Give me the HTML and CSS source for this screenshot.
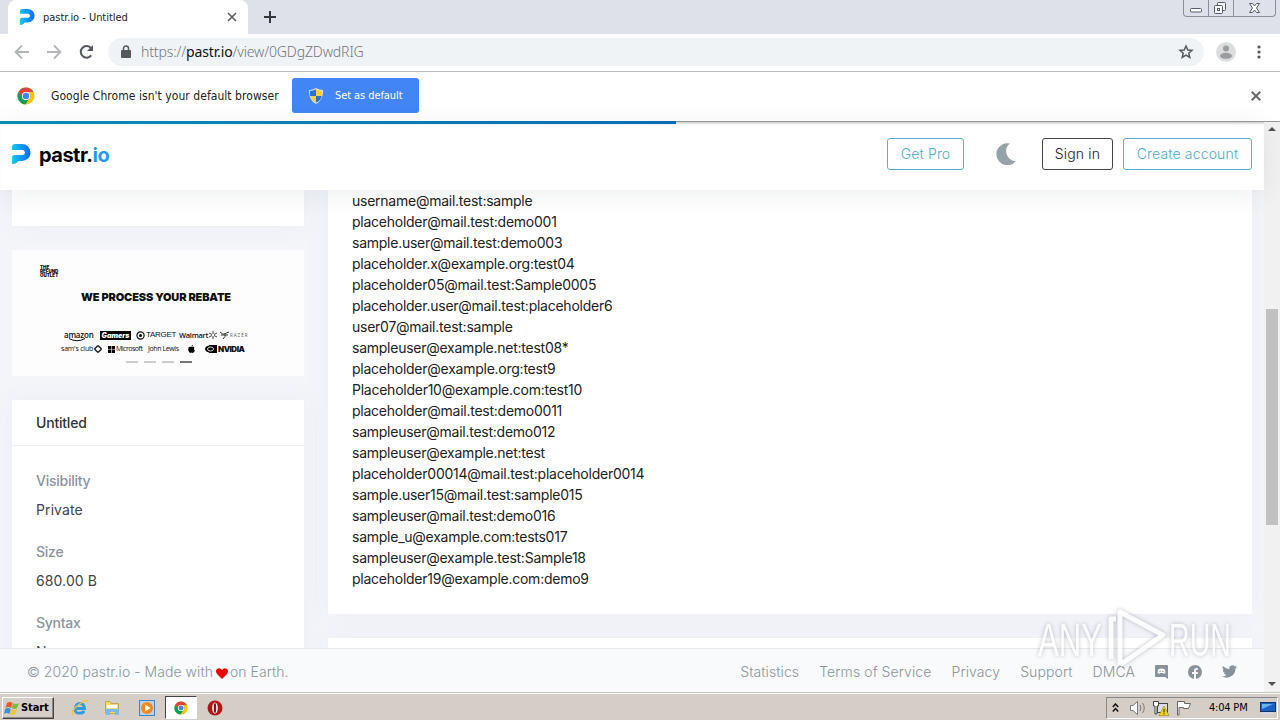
FILE: index.html
```html
<!DOCTYPE html>
<html lang="en">
<head>
<meta charset="utf-8">
<title>pastr.io - Untitled</title>
<link rel="stylesheet" href="styles.css">
</head>
<body>
<svg width="0" height="0" class="defs">
	<defs>
		<linearGradient id="pgrad" x1="0" y1="0" x2="1" y2="0"><stop offset="0" stop-color="#12c8f8"/><stop offset="1" stop-color="#0a68f0"/></linearGradient>
		<symbol id="logo" viewBox="0 0 20 20"><path fill="url(#pgrad)" d="M1 3Q1 0 4 0H11A8.500 8.500 0 0 1 11 17H7Q6 20 1 20V14Q1 11 4 11H12Q14 10 14 8.500T12 6H1Z"/></symbol>
		<symbol id="chrome" viewBox="0 0 18 18"><circle cx="9" cy="9" r="8.500" fill="#fbc116"/><path fill="#db4437" d="M1.600 4.800A8.500 8.500 0 0 1 16.500 5H9A4 4 0 0 0 5.300 10.800Z"/><path fill="#109d59" d="M1.600 4.800L5.500 11A4 4 0 0 0 12.200 11.300L8.500 17.500A8.500 8.500 0 0 1 1.600 4.800Z"/><circle cx="9" cy="9" r="4" fill="#fff"/><circle cx="9" cy="9" r="3.200" fill="#4285f4"/></symbol>
	</defs>
</svg>
<div class="tabstrip">
	<div class="tab">
		<svg class="favicon" width="16" height="16"><use href="#logo"/></svg>
		<span class="tabtitle">pastr.io - Untitled</span>
		<svg width="10" height="10" viewBox="0 0 10 10" stroke="#5a5d61" stroke-width="1.600"><path d="M1 1L9 9M9 1L1 9"/></svg>
	</div>
	<svg class="newtab" width="12" height="12" viewBox="0 0 12 12" stroke="#35383d" stroke-width="2"><path d="M6 0V12M0 6H12"/></svg>
	<div class="winbuttons">
		<span><svg width="24" height="16" fill="#fff" stroke="#555a66"><rect x="6.500" y="8.500" width="11" height="3.500" rx="1"/></svg></span>
		<span><svg width="24" height="16" fill="#f4f6f8" stroke="#555a66"><rect x="8.500" y="2.500" width="8" height="8" rx="1"/><rect x="5.500" y="5.500" width="8" height="8" rx="1"/><rect x="8.500" y="8.500" width="2" height="2"/></svg></span>
		<span><svg width="41" height="16" fill="#fff" stroke="#555a66"><path d="M15.500 3.500H18.500L20.500 6L22.500 3.500H25.500L22.500 8L25.500 12.500H22.500L20.500 10L18.500 12.500H15.500L18.500 8Z"/></svg></span>
	</div>
</div>
<div class="toolbar">
	<svg width="96" height="20" viewBox="0 0 96 20" fill="none" stroke-width="1.800">
		<path stroke="#b4b6b9" d="M15 10H2M8 3.500L1.500 10L8 16.500M33 10H46M40 3.500L46.500 10L40 16.500"/>
		<path stroke="#55585c" stroke-width="2" d="M77.200 13.400A5.800 5.800 0 1 1 76.700 5.800"/><path fill="#55585c" d="M79 3V9H73Z"/>
	</svg>
	<div class="omnibox">
		<svg width="10" height="13" viewBox="0 0 10 13"><rect y="5" width="10" height="8" rx="1" fill="#55585c"/><path d="M2.500 5V3.500A2.500 2.500 0 0 1 7.500 3.500V5" fill="none" stroke="#55585c" stroke-width="1.500"/></svg>
		<span class="url">https://<b>pastr.io</b>/view/0GDgZDwdRIG</span>
		<svg class="star" width="16" height="16" viewBox="0 0 16 16" fill="none" stroke="#55585c" stroke-width="1.500"><path d="M8 2L9.800 6L14 6.400L10.800 9.200L11.800 13.500L8 11.200L4.200 13.500L5.200 9.200L2 6.400L6.200 6Z"/></svg>
	</div>
	<svg class="avatar" width="20" height="20" viewBox="0 0 20 20"><circle cx="10" cy="10" r="10" fill="#dcdddf"/><circle cx="10" cy="6.500" r="3" fill="#9b9da0"/><ellipse cx="10" cy="13.800" rx="6" ry="3" fill="#9b9da0"/></svg>
	<svg class="dots" width="4" height="16" fill="#55585c"><circle cx="2" cy="3" r="1.600"/><circle cx="2" cy="8" r="1.600"/><circle cx="2" cy="13" r="1.600"/></svg>
</div>
<div class="infobar">
	<svg width="18" height="18"><use href="#chrome"/></svg>
	<span class="infotext">Google Chrome isn't your default browser</span>
	<button class="setdefault">
		<svg width="14" height="16" viewBox="0 0 14 16"><path fill="#dfe3ea" d="M7 0Q10 2 14 2Q14.500 12 7 16Q-.5 12 0 2Q4 2 7 0Z"/><path fill="#2e6fd0" d="M7 1.300V8H1.200Q.8 6 1 3Q4 3 7 1.300ZM7 8H12.800Q12 12.500 7 14.800Z"/><path fill="#f7d13c" d="M7 1.300V8H12.800Q13.200 6 13 3Q10 3 7 1.300ZM7 8H1.200Q2 12.500 7 14.800Z"/></svg>
		<span>Set as default</span>
	</button>
	<svg class="infoclose" width="10" height="10" viewBox="0 0 10 10" stroke="#66696d" stroke-width="2"><path d="M.7 .7L9.300 9.300M9.300 .7L.7 9.300"/></svg>
</div>
<div class="viewport">
	<div class="progress"></div>
	<div class="page">
		<header>
			<svg width="20" height="20"><use href="#logo"/></svg>
			<span class="brand">pastr.<i>io</i></span>
			<a class="btn getpro">Get Pro</a>
			<svg class="moon" width="20" height="22" viewBox="0 0 20 22"><path fill="#96a2a9" d="M14 0.500A11 11 0 1 0 20 18A9.800 9.800 0 0 1 14 0.500Z"/></svg>
			<a class="btn dark">Sign in</a>
			<a class="btn create">Create account</a>
		</header>
		<main>
			<aside>
				<div class="card stub"></div>
				<div class="ad">
					<div class="adlogo">THE<br>REFUND<br>OUTLET</div>
					<div class="adhead">WE PROCESS YOUR REBATE</div>
					<div class="brands">
						<span class="amazon">amazon<svg width="18" height="4" fill="none" stroke="#111"><path d="M1 .5Q9 5 17 .5"/></svg></span>
						<span class="gamers">Gamers</span>
						<span class="target"><svg width="9" height="9"><circle cx="4.500" cy="4.500" r="3.600" fill="none" stroke="#111" stroke-width="1.200"/><circle cx="4.500" cy="4.500" r="1.500"/></svg>TARGET</span>
						<span class="walmart">Walmart<svg width="8" height="8" stroke="#444"><path d="M4 0V3M4 5V8M0 2L3 3.500M5 4.500L8 6M8 2L5 3.500M3 4.500L0 6"/></svg></span>
						<span class="razer"><svg width="9" height="9" fill="none" stroke="#333"><path d="M0 1Q3 4 4.500 3T9 1M1 4H8M3 8Q6 6 5 2"/></svg>RAZER</span>
					</div>
					<div class="brands second">
						<span class="sams">sam's club<svg width="8" height="8"><rect x="1.500" y="1.500" width="5" height="5" rx="1" fill="none" stroke="#222" stroke-width="1.500" transform="rotate(45 4 4)"/></svg></span>
						<span class="micro"><svg width="7" height="7"><path d="M0 0H3.200V3.200H0ZM3.800 0H7V3.200H3.800ZM0 3.800H3.200V7H0ZM3.800 3.800H7V7H3.800Z"/></svg>Microsoft</span>
						<span class="lewis">John Lewis</span>
						<svg class="apple" width="7" height="8"><path d="M3.500 2Q6 1 6.500 3Q5 4 7 5.500Q5.500 9 3.500 7.500Q1.500 9 .3 5.500Q-.4 1 3.500 2ZM3.300 1.500Q3.500 0 5 0Q5 1.500 3.300 1.500Z"/></svg>
						<span class="nvidia"><svg width="12" height="8"><path d="M4 0H12V8H4Z"/><ellipse cx="5" cy="4" rx="5" ry="3.500"/><ellipse cx="5.500" cy="4" rx="3" ry="2" fill="none" stroke="#ddd"/></svg>NVIDIA</span>
					</div>
					<div class="dashes"><i></i><i></i><i></i><i class="on"></i></div>
				</div>
				<div class="card info">
					<h2>Untitled</h2>
					<dl>
						<dt>Visibility</dt><dd>Private</dd>
						<dt>Size</dt><dd>680.00 B</dd>
						<dt>Syntax</dt><dd>None</dd>
					</dl>
				</div>
			</aside>
			<section>
				<div class="card paste"><pre>username@mail.test:sample
placeholder@mail.test:demo001
sample.user@mail.test:demo003
placeholder.x@example.org:test04
placeholder05@mail.test:Sample0005
placeholder.user@mail.test:placeholder6
user07@mail.test:sample
sampleuser@example.net:test08*
placeholder@example.org:test9
Placeholder10@example.com:test10
placeholder@mail.test:demo0011
sampleuser@mail.test:demo012
sampleuser@example.net:test
placeholder00014@mail.test:placeholder0014
sample.user15@mail.test:sample015
sampleuser@mail.test:demo016
sample_u@example.com:tests017
sampleuser@example.test:Sample18
placeholder19@example.com:demo9</pre></div>
				<div class="card next"></div>
			</section>
		</main>
		<footer>
			<span class="copy">© 2020 pastr.io - Made with <svg width="12" height="11" viewBox="0 0 12 11"><path fill="#f00000" d="M6 11L1 6Q-1 3 1 1Q3.500-1 6 2Q8.500-1 11 1Q13 3 11 6Z"/></svg> on Earth.</span>
			<nav>
				<a>Statistics</a><a>Terms of Service</a><a>Privacy</a><a>Support</a><a>DMCA</a>
				<svg width="13" height="14" viewBox="0 0 13 14"><path fill="#87929a" d="M1 0H12Q13 0 13 1V14L10 12H1Q0 12 0 11V1Q0 0 1 0Z"/><path fill="#f6f8fb" d="M3 4.500Q6.500 2.500 10 4.500L10.500 8L8.500 9L8 8H5L4.500 9L2.500 8Z"/><path stroke="#87929a" stroke-width="1.200" d="M4.500 6.300H5.700M7.300 6.300H8.500"/></svg>
				<svg width="14" height="14" viewBox="0 0 14 14"><circle cx="7" cy="7" r="7" fill="#87929a"/><path fill="#f6f8fb" d="M6 14V9H4V7H6V5.500Q6 3 8.500 3H10V4.800H9Q8 4.800 8 5.800V7H10L9.700 9H8V14Z"/></svg>
				<svg width="15" height="13" viewBox="0 0 24 20"><path fill="#87929a" d="M24 2.400a10 10 0 0 1-2.800.8A5 5 0 0 0 23.300.5a10 10 0 0 1-3.100 1.200A4.900 4.900 0 0 0 11.800 6.200 14 14 0 0 1 1.700 1 4.900 4.900 0 0 0 3.200 7.600 5 5 0 0 1 1 7a4.900 4.900 0 0 0 3.900 4.900 5 5 0 0 1-2.200.1 4.900 4.900 0 0 0 4.600 3.400A10 10 0 0 1 0 17.500 14 14 0 0 0 21.500 5Q23 4 24 2.400Z"/></svg>
			</nav>
		</footer>
	</div>
	<div class="scrollbar">
		<svg width="8" height="4"><path fill="#505050" d="M0 4L4 0L8 4Z"/></svg>
		<div class="thumb"></div>
		<svg class="down" width="8" height="4"><path fill="#505050" d="M0 0L4 4L8 0Z"/></svg>
	</div>
</div>
<div class="taskbar">
	<div class="start">
		<svg width="16" height="16" viewBox="0 0 16 16"><path fill="#e55b2b" d="M3 3Q6 1 8.500 3L7 8Q4.500 6 1.500 8Z"/><path fill="#7dbb42" d="M9 3Q12 5 15 3L13 8Q10.500 10 7.700 8Z"/><path fill="#3d8fd8" d="M1.200 9Q4 7 6.800 9L5.500 14Q3 12 0 14Z"/><path fill="#f7c531" d="M7.500 9Q10 11 13 9L11.500 14Q9 16 6 14Z"/></svg>
		Start
	</div>
	<svg class="ie" width="18" height="18"><path fill="none" stroke="#2f9ce0" stroke-width="2.800" d="M4.500 9.500H13.500Q13 4.500 9 4.500T4.200 9.500T9 14.200Q12 14.200 13.200 12"/><path fill="none" stroke="#f2c33d" stroke-width="1.500" d="M2 16Q-1 12 8 5.500T16 3"/></svg>
	<svg class="folder" width="16" height="16"><path fill="#f4d978" stroke="#c8a545" d="M1.500 1.500H6L7 3.500H14.500V13.500H1.500Z"/><path fill="#fff" d="M3 5H13V8H3Z"/><path fill="#78bde5" d="M2 9H15V15H11V12H6V15H2Z"/></svg>
	<svg class="player" width="16" height="16" viewBox="0 0 16 16"><rect x=".5" y=".5" width="15" height="15" fill="#b6d5ed" stroke="#4382bd"/><circle cx="8" cy="8" r="6" fill="#f08a1c"/><path fill="#fff" d="M6 4.500L11.500 8L6 11.500Z"/></svg>
	<div class="active"><svg width="14" height="14"><use href="#chrome"/></svg></div>
	<svg class="opera" width="16" height="16"><circle cx="8" cy="8" r="7.500" fill="#b51514"/><ellipse cx="8" cy="8" rx="2.800" ry="5.500" fill="#fff"/><ellipse cx="8" cy="8" rx="1.200" ry="5" fill="#8d0d0d"/></svg>
	<div class="tray">
		<svg width="7" height="9" fill="none" stroke="#111" stroke-width="1.500"><path d="M.8 4L3.500 1L6.200 4M.8 8.500L3.500 5.500L6.200 8.500"/></svg>
		<svg class="sound" width="17" height="16" fill="#fff" stroke="#777"><path d="M1.500 5.500H4L8.500 1.500V14.500L4 10.500H1.500Z"/><path fill="none" d="M11 5Q13 8 11 11M13.500 3Q17 8 13.500 13"/></svg>
		<svg class="net" width="16" height="16"><rect x="4.500" y="3.500" width="10" height="9" fill="#d9dfe4" stroke="#444"/><path fill="#fff" stroke="#444" d="M.5 1.500H5.500V6H4V14H2V6H.5Z"/><path fill="#f9d613" stroke="#8a7500" stroke-width=".5" d="M11 6L16 15.500H6Z"/><path stroke="#222" d="M11 9V12.500M11 13.300V14.500"/></svg>
		<svg class="flag" width="16" height="16"><path fill="#fff" stroke="#666" d="M1.500 15V1.500H8.500V3.500H14.500L12.500 8.500H7.500V7.500H3V15Z"/></svg>
		<span class="clock">4:04 PM</span>
		<svg class="desk" width="16" height="14"><rect x=".5" y="1.500" width="15" height="9" fill="#1862c6" stroke="#10336f"/><path fill="#6ab2f0" d="M2 3H13L2 8Z"/><path fill="#cfd8df" d="M4 11H12L14 13.500H2Z"/></svg>
	</div>
</div>
<svg class="watermark" width="200" height="70" viewBox="0 0 200 70">
	<text x="2" y="51" textLength="64" lengthAdjust="spacingAndGlyphs">ANY</text>
	<path d="M75 54V14H80M84 60V7L127 30L84 60"/>
	<text x="133" y="51" textLength="62" lengthAdjust="spacingAndGlyphs">RUN</text>
</svg>
</body>
</html>
```
FILE: styles.css
```css
* {
	box-sizing: border-box;
}
body {
	margin: 0;
	width: 1280px;
	height: 720px;
	overflow: hidden;
	display: flex;
	flex-direction: column;
	font-family: "DejaVu Sans Condensed", "Noto Sans", sans-serif;
	font-size: 11px;
	color: #222;
}
svg {
	flex: none;
	display: block;
}
.defs {
	position: absolute;
}
.tabstrip {
	height: 34px;
	background: #dee1e9;
	display: flex;
	padding-left: 8px;
}
.tab {
	width: 240px;
	background: #fff;
	border-radius: 8px 8px 0 0;
	display: flex;
	align-items: center;
	padding: 0 11px;
}
.favicon {
	margin-right: 8px;
}
.tabtitle {
	flex: 1;
	letter-spacing: -0.03px;
}
.newtab {
	margin: 11px 0 0 16px;
}
.winbuttons {
	margin-left: auto;
	margin-right: 4px;
	height: 17px;
	display: flex;
	border: 1px solid #8a8f9c;
	border-top: 0;
	border-radius: 0 0 4px 4px;
}
.winbuttons span + span {
	border-left: 1px solid #8a8f9c;
}
.toolbar {
	height: 38px;
	border-bottom: 1px solid #b9bbbd;
	background: #fff;
	display: flex;
	align-items: center;
	padding: 0 19px 2px 14px;
}
.omnibox {
	flex: 1;
	height: 28px;
	border-radius: 14px;
	background: #f0f3f6;
	margin-left: -2px;
	display: flex;
	align-items: center;
	padding: 0 10px 0 13px;
}
.url {
	flex: 1;
	font-size: 14px;
	font-family: "Noto Sans", sans-serif;
	font-weight: 300;
	color: #70757a;
	margin-left: 10px;
	letter-spacing: -0.13px;
}
.url b {
	font-weight: 400;
	color: #111;
}
.avatar {
	margin-left: 12px;
}
.dots {
	margin-left: 21px;
}
.infobar {
	height: 49px;
	background: #fff;
	display: flex;
	align-items: center;
	padding: 0 19px 2px 17px;
}
.infotext {
	width: 241px;
	margin-left: 16px;
	font-size: 12px;
	letter-spacing: 0.05px;
	white-space: nowrap;
}
.setdefault {
	width: 127px;
	height: 35px;
	border: 0;
	border-radius: 3px;
	background: #4285f4;
	color: #fff;
	font: inherit;
	letter-spacing: -0.08px;
	display: flex;
	align-items: center;
	padding: 0 0 0 17px;
	gap: 12px;
	white-space: nowrap;
}
.infoclose {
	margin-left: auto;
}
.viewport {
	position: relative;
	height: 571px;
	border-top: 1px solid #999;
	display: flex;
	font-family: Inter, sans-serif;
	font-size: 14px;
}
.progress {
	position: absolute;
	z-index: 3;
	left: 0;
	top: -1px;
	width: 676px;
	height: 3px;
	background: linear-gradient(90deg, #0c8bb4, #0d6cb3);
}
.page {
	width: 1264px;
	display: flex;
	flex-direction: column;
	background: #f3f5f9;
}
header {
	position: relative;
	z-index: 2;
	flex: none;
	height: 68px;
	background: #fff;
	box-shadow: 0 4px 26px rgba(60, 70, 90, 0.09), inset 0 3px 3px -2px #bbb;
	display: flex;
	align-items: center;
	padding: 0 12px 4px 11px;
}
.brand {
	font-size: 20px;
	font-weight: 700;
	color: #000;
	margin: 2px 0 0 8px;
	letter-spacing: -0.5px;
}
.brand i {
	font-style: normal;
	color: #2499f3;
}
.btn {
	height: 32px;
	border: 1px solid #53b3cd;
	border-radius: 3px;
	color: #4dadc9;
	line-height: 30px;
	text-align: center;
	letter-spacing: 0.15px;
	font-weight: 300;
	font-size: 14px;
}
.getpro {
	width: 77px;
	margin-left: auto;
}
.moon {
	margin: 0 26px 0 32px;
}
.dark {
	width: 71px;
	border-color: #444;
	color: #222;
}
.create {
	width: 129px;
	margin-left: 10px;
}
main {
	height: 458px;
	overflow: hidden;
	display: grid;
	grid-template-columns: 292px 924px;
	column-gap: 24px;
	padding: 0 12px;
}
.card {
	background: #fff;
	box-shadow: 0 0 24px rgba(90, 100, 170, 0.05);
}
.stub {
	height: 36px;
}
.ad {
	height: 126px;
	margin: 24px 0;
	background: #fdfdfe;
	color: #111;
	padding-top: 16px;
	font-family: "Open Sans", sans-serif;
}
.adlogo {
	font: 900 4.5px/4px Inter, sans-serif;
	margin-left: 28px;
}
.adhead {
	font-family: Inter, sans-serif;
	font-size: 11px;
	font-weight: 900;
	line-height: 14px;
	text-align: center;
	margin: 12px 4px 0 0;
	letter-spacing: -0.15px;
}
.brands {
	display: flex;
	align-items: center;
	height: 12px;
	margin: 25px 0 0 52px;
	gap: 5px;
	font-size: 8px;
	line-height: 10px;
	white-space: nowrap;
}
.brands span {
	display: flex;
	align-items: center;
	gap: 1px;
}
.brands .amazon {
	position: relative;
	font-weight: 600;
	letter-spacing: -0.2px;
	width: 31px;
}
.amazon svg {
	position: absolute;
	left: 4px;
	top: 8px;
}
.brands .gamers {
	background: #000;
	color: #fff;
	width: 31px;
	height: 9px;
	font: italic 900 7px/9px Inter, sans-serif;
	justify-content: center;
}
.brands .target {
	font-family: "Liberation Sans", sans-serif;
	width: 38px;
	letter-spacing: -0.3px;
}
.brands .walmart {
	font-weight: 600;
	font-size: 7.5px;
	letter-spacing: -0.3px;
	width: 36px;
}
.brands .razer {
	font-size: 4.5px;
	letter-spacing: 1px;
	color: #555;
}
.second {
	margin: 2px 0 0 49px;
	gap: 9px;
	font-size: 7px;
	letter-spacing: -0.2px;
}
.brands .sams {
	width: 38px;
}
.brands .micro {
	width: 31px;
	letter-spacing: -0.5px;
}
.brands .lewis {
	width: 28px;
	letter-spacing: -0.4px;
}
.apple {
	margin: 0 1px 0 3px;
}
.brands .nvidia {
	font: 900 8px/10px Inter, sans-serif;
	letter-spacing: -0.5px;
}
.dashes {
	display: flex;
	gap: 6px;
	margin: 6px 0 0 114px;
}
.dashes i {
	width: 12px;
	height: 2px;
	background: #ccc;
}
.dashes .on {
	background: #777;
}
.info {
	height: 300px;
}
h2 {
	margin: 0;
	height: 46px;
	border-bottom: 1px solid #eef0f3;
	padding-left: 24px;
	font-size: 14px;
	line-height: 46px;
	font-weight: 500;
	color: #333;
	letter-spacing: -0.2px;
}
dl {
	margin: 0;
	padding: 24px 24px;
}
dt {
	line-height: 21px;
	font-weight: 500;
	color: #8b93a0;
	letter-spacing: -0.25px;
}
dd {
	margin: 8px 0 21px;
	line-height: 21px;
	color: #444;
	letter-spacing: 0.1px;
}
.paste {
	height: 424px;
	padding: 0 24px;
}
pre {
	margin: 0;
	font-family: Inter, sans-serif;
	font-size: 14px;
	line-height: 21px;
	letter-spacing: -0.25px;
	color: #222;
}
.next {
	height: 60px;
	margin-top: 24px;
}
footer {
	position: relative;
	flex: 1;
	border-top: 1px solid #e6e8ec;
	background: #f8fafc;
	display: flex;
	align-items: center;
	justify-content: space-between;
	padding: 2px 27px 0 27px;
	color: #8b959b;
	font-weight: 300;
	font-size: 14px;
}
.copy {
	letter-spacing: 0.05px;
}
.copy svg {
	display: inline-block;
	vertical-align: -2px;
	margin: 0 -2px 0 -1px;
}
nav {
	display: flex;
	align-items: center;
	gap: 20px;
	letter-spacing: 0.1px;
}
.scrollbar {
	width: 16px;
	background: #f1f1f1;
	display: flex;
	flex-direction: column;
	align-items: center;
	padding: 5px 0 6px;
}
.thumb {
	width: 12px;
	height: 216px;
	margin-top: 178px;
	background: #c1c1c1;
}
.down {
	margin-top: auto;
}
.taskbar {
	height: 28px;
	background: #d5cec6;
	border-top: 1px solid #c4c4bf;
	box-shadow: inset 0 1px #fff;
	display: flex;
	align-items: center;
	padding: 3px 2px 1px 2px;
}
.start {
	width: 52px;
	height: 22px;
	border: 1px solid;
	border-color: #fff #444 #444 #fff;
	box-shadow: inset -1px -1px #888;
	display: flex;
	align-items: center;
	gap: 1px;
	padding-left: 1px;
	font-weight: bold;
	color: #000;
	letter-spacing: -0.1px;
}
.ie {
	margin-left: 17px;
}
.folder {
	margin-left: 15px;
}
.player {
	margin-left: 19px;
}
.active {
	width: 32px;
	height: 23px;
	margin-left: 10px;
	border: 1px solid;
	border-color: #444 #fff #fff #444;
	background: #fff;
	display: flex;
	align-items: center;
	justify-content: center;
}
.opera {
	margin-left: 10px;
}
.tray {
	width: 172px;
	height: 22px;
	margin-left: auto;
	border: 1px solid;
	border-color: #888 #fff #fff #888;
	display: flex;
	align-items: center;
	padding: 0 1px 0 5px;
	color: #000;
}
.sound {
	margin-left: 10px;
}
.net {
	margin-left: 7px;
}
.flag {
	margin-left: 7px;
}
.clock {
	width: 41px;
	margin: 0 0 0 17px;
	letter-spacing: -0.2px;
	white-space: nowrap;
}
.desk {
	margin-left: auto;
}
.watermark {
	position: absolute;
	z-index: 5;
	left: 1036px;
	top: 605px;
	filter: drop-shadow(0 0 2px rgba(90, 90, 100, 0.55));
	opacity: 0.7;
}
.watermark text {
	font: 47px "Liberation Sans", sans-serif;
	fill: #fff;
}
.watermark path {
	fill: none;
	stroke: #fff;
	stroke-width: 5;
	stroke-linejoin: round;
}
```
